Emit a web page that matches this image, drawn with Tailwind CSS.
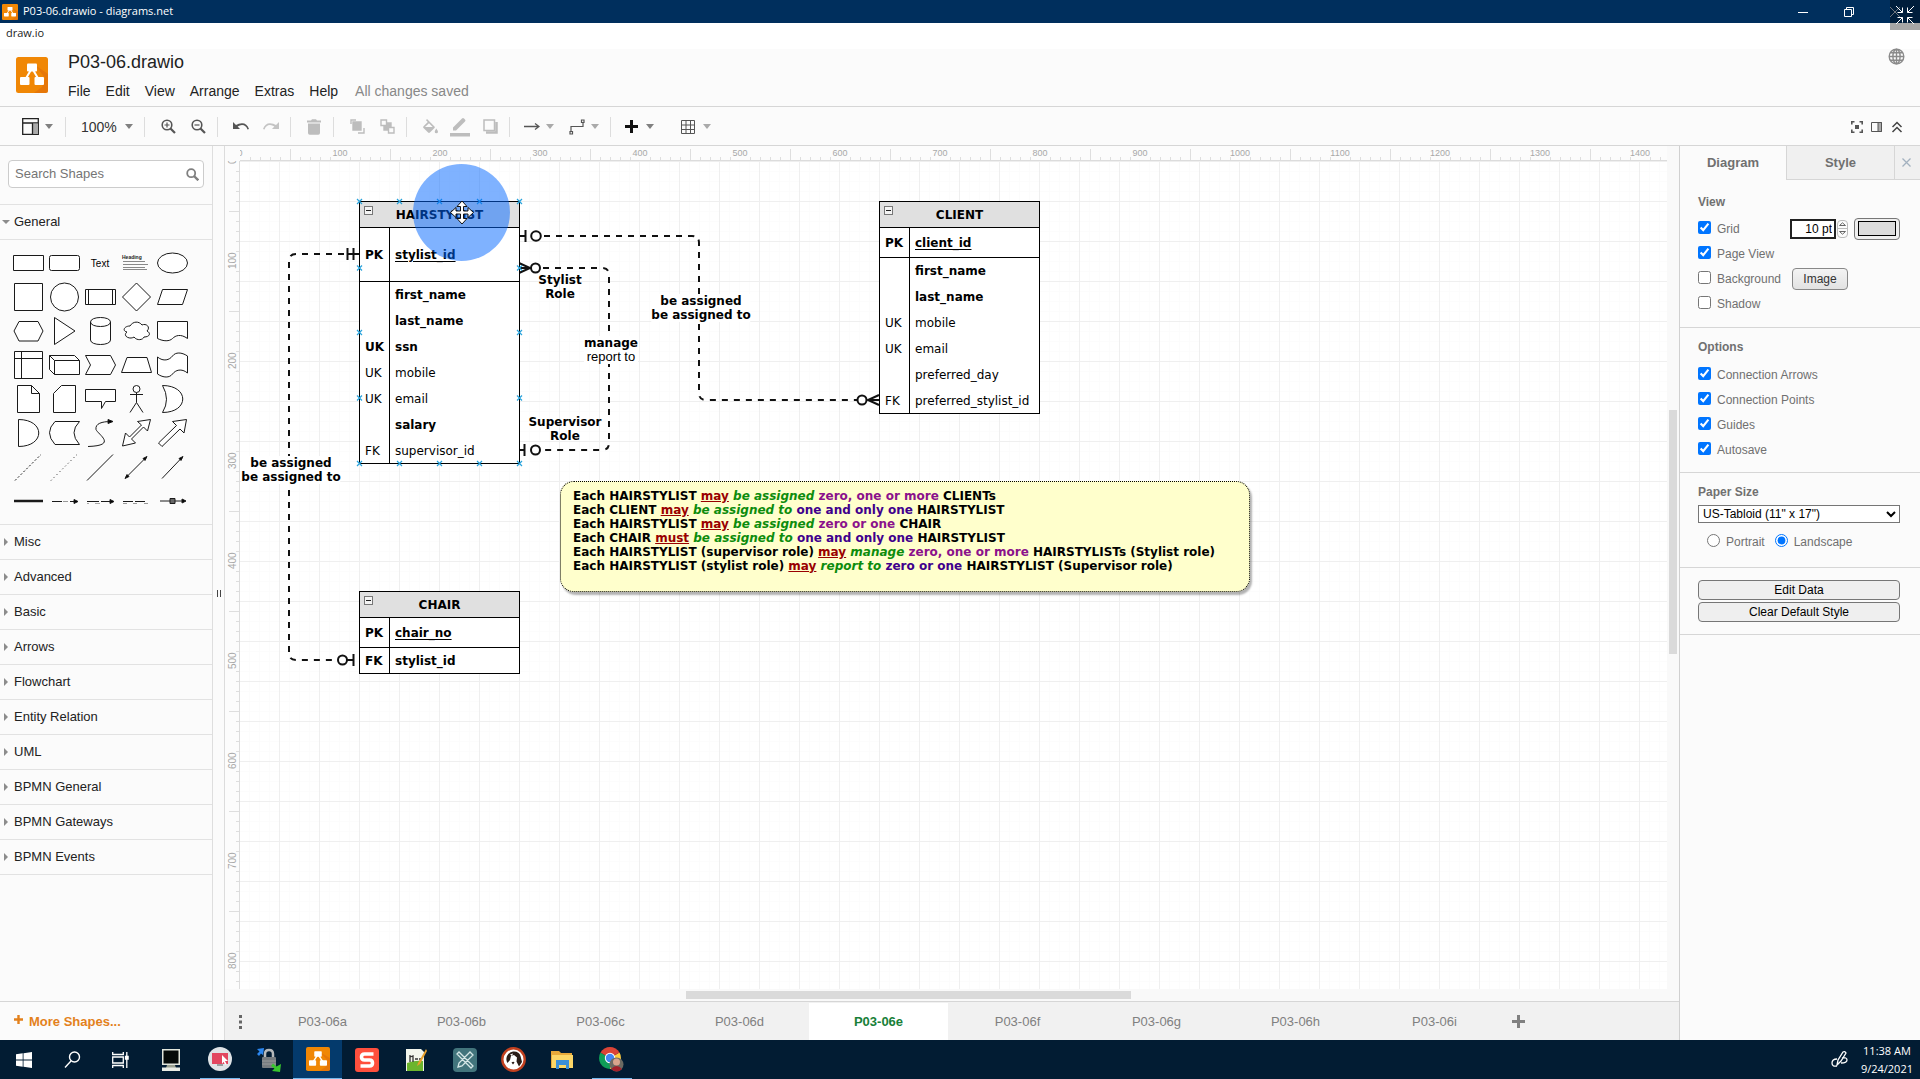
<!DOCTYPE html>
<html lang="en">
<head>
<meta charset="utf-8">
<title>P03-06.drawio - diagrams.net</title>
<script src="https://cdn.jsdelivr.net/npm/@tailwindcss/browser@4"></script>
</head>
<body class="flex min-h-screen flex-col overflow-x-hidden bg-[#fbfbfb] font-['Liberation_Sans',Arial,sans-serif] text-black">

<svg class="hidden">
  <symbol id="caret" viewBox="0 0 8 5"><path d="M0 0h8L4 5z" fill="currentColor"/></symbol>
  <symbol id="fold" viewBox="0 0 4 8"><path d="M0 0l4 4-4 4z" fill="#8c8c8c"/></symbol>
  <symbol id="drawio" viewBox="0 0 32 36" preserveAspectRatio="none">
    <rect width="32" height="36" rx="2.5" fill="#f08705"/>
    <path d="M19 8l10 13-3 9-8 6h11.500a2.500 2.500 0 002.500-2.500V17z" fill="#df6c0c" opacity=".6"/>
    <path d="M15.500 12L9 23M16.500 12L23 23" stroke="#fff" stroke-width="2"/>
    <rect x="11" y="6.500" width="10" height="8" rx="1" fill="#fff"/>
    <rect x="4" y="20" width="9.500" height="8" rx="1" fill="#fff"/>
    <rect x="18.500" y="20" width="9.500" height="8" rx="1" fill="#fff"/>
  </symbol>
  <symbol id="collapse" viewBox="0 0 9 9"><rect x=".5" y=".5" width="8" height="8" fill="#f4f4f4" stroke="#777"/><path d="M2 4.500h5" stroke="#222"/></symbol>
</svg>

<!-- Window title bar -->
<div class="relative flex h-[23px] items-center bg-[#002f5d] pl-[2px] font-['Open_Sans','Noto_Sans',sans-serif] text-[11px] text-white">
  <svg class="mr-[5px] h-4 w-4"><use href="#drawio"/></svg>
  <span>P03-06.drawio - diagrams.net</span>
  <div class="ml-auto flex items-center pr-[2px]">
    <button class="flex h-5 w-[46px] items-center justify-center" aria-label="Minimize"><svg width="10" height="10"><path d="M0 5.500h10" stroke="#fff"/></svg></button>
    <button class="flex h-5 w-[46px] items-center justify-center" aria-label="Restore"><svg width="10" height="10" fill="none" stroke="#fff"><path d="M.5 2.500h7v7h-7zM2.500 2.500v-2h7v7h-2"/></svg></button>
    <button class="flex h-5 w-[46px] items-center justify-center" aria-label="Close"><svg width="10" height="10" stroke="#aab4c0"><path d="M0 0l10 10M10 0L0 10"/></svg></button>
  </div>
  <button class="absolute right-0 top-0 flex h-[30px] w-[30px] items-center justify-center bg-black/35" aria-label="Exit full screen">
    <svg width="18" height="18" fill="none" stroke="#fff"><path d="M0 0l6.500 6.500M1.500 6.500h5v-5M18 0l-6.500 6.500M16.500 6.500h-5v-5M0 18l6.500-6.500M1.500 11.500h5v5M18 18l-6.500-6.500M16.500 11.500h-5v5"/></svg>
  </button>
</div>
<div class="h-[26px] bg-white pl-[6px] pt-[2px] font-['Open_Sans','Noto_Sans',sans-serif] text-[11px] leading-[16px] text-[#222]">draw.io</div>

<!-- File name and menus -->
<header class="flex h-[58px] items-start border-b border-[#d6d6d6] pl-4">
  <svg class="mt-2 h-9 w-8 shrink-0"><use href="#drawio"/></svg>
  <div class="ml-5">
    <h1 class="mt-[2px] text-lg leading-[22px] text-[#222]">P03-06.drawio</h1>
    <nav class="mt-[9px] flex gap-[15px] text-sm leading-[18px] text-[#222]">
      <button>File</button><button>Edit</button><button>View</button><button>Arrange</button><button>Extras</button><button>Help</button>
      <span class="ml-[2px] text-[#888]">All changes saved</span>
    </nav>
  </div>
  <button class="ml-auto mr-[15px] -mt-[1px]" aria-label="Language">
    <svg width="17" height="17" viewBox="0 0 17 17" fill="none" stroke="#8a8a8a" stroke-width="1.400"><circle cx="8.500" cy="8.500" r="7.300"/><ellipse cx="8.500" cy="8.500" rx="3.600" ry="7.300"/><path d="M8.500 1v15M1 8.500h15M2.300 4.700h12.400M2.300 12.300h12.400"/></svg>
  </button>
</header>

<!-- Toolbar -->
<div class="flex h-[39px] items-center border-b border-[#d6d6d6] pt-[1px] text-[#808080]">
  <div class="flex h-5 w-[66px] items-center border-r border-[#ddd] pl-[22px]">
    <button class="flex items-center gap-[6px]" aria-label="View"><svg width="17" height="17" fill="none" stroke="#222" stroke-width="1.300"><path d="M.7.7h15.600v15.600H.7zM.7 5h15.600"/><path d="M11 5.500h5v10.500h-5z" fill="#aaa" stroke="none"/><path d="M10.500 5v11"/></svg><svg class="h-[5px] w-2"><use href="#caret"/></svg></button>
  </div>
  <div class="flex h-5 w-[79px] items-center border-r border-[#ddd] pl-[15px]">
    <button class="flex items-center gap-2 text-sm"><span class="text-[#333]">100%</span><svg class="h-[5px] w-2"><use href="#caret"/></svg></button>
  </div>
  <div class="flex h-5 w-[73px] items-center border-r border-[#ddd] pl-2">
    <button class="flex w-[30px] justify-center" aria-label="Zoom in"><svg width="15" height="15" fill="none" stroke="#555"><circle cx="6" cy="6" r="4.800" stroke-width="1.600"/><path d="M9.500 9.500l4.500 4.500" stroke-width="2.200"/><path d="M3.500 6h5M6 3.500v5" stroke-width="1.200"/></svg></button>
    <button class="flex w-[30px] justify-center" aria-label="Zoom out"><svg width="15" height="15" fill="none" stroke="#555"><circle cx="6" cy="6" r="4.800" stroke-width="1.600"/><path d="M9.500 9.500l4.500 4.500" stroke-width="2.200"/><path d="M3.500 6h5" stroke-width="1.200"/></svg></button>
  </div>
  <div class="flex h-5 w-[73px] items-center border-r border-[#ddd] pl-2">
    <button class="flex w-[30px] justify-center" aria-label="Undo"><svg width="16" height="9"><path d="M0 0v7h7L4.600 4.600Q7 3 9 3q4 0 5.500 4.500L16 7Q14 1.200 9 1.200 5.500 1.200 3 3z" fill="#555"/></svg></button>
    <button class="flex w-[30px] justify-center" aria-label="Redo"><svg width="16" height="9"><path d="M16 0v7H9l2.400-2.400Q9 3 7 3 3 3 1.500 7.500L0 7Q2 1.200 7 1.200q3.500 0 6 1.800z" fill="#c4c4c4"/></svg></button>
  </div>
  <div class="flex h-5 w-[43px] items-center justify-center border-r border-[#ddd] pl-1">
    <button aria-label="Delete"><svg width="14" height="16" fill="#bdbdbd"><path d="M0 1.500h4L5 .3h4l1 1.200h4v2H0zM1 4.500h12V14q0 1.700-1.700 1.700H2.700Q1 15.700 1 14z"/></svg></button>
  </div>
  <div class="flex h-5 w-[73px] items-center border-r border-[#ddd] pl-2">
    <button class="flex w-[30px] justify-center" aria-label="To front"><svg width="15" height="15" fill="none" stroke="#bdbdbd" stroke-width="1.400"><path d="M3 3h8v8H3z" fill="#bdbdbd"/><path d="M1 5V1h5M14 9v5H8"/></svg></button>
    <button class="flex w-[30px] justify-center" aria-label="To back"><svg width="15" height="15" fill="none" stroke="#bdbdbd" stroke-width="1.400"><path d="M1 1h5.500v5.500H1zM8.500 8.500H14V14H8.500z"/><path d="M7.500 4H11v3.500H7.500zM4 7.500h3.500V11H4z" fill="#bdbdbd"/></svg></button>
  </div>
  <div class="flex h-5 w-[103px] items-center border-r border-[#ddd] pl-2">
    <button class="flex w-[30px] justify-center" aria-label="Fill color"><svg width="16" height="15" fill="#bdbdbd"><path d="M5 0l7.500 7.500q.7.700 0 1.400l-4.600 4.600q-.9.900-1.800 0L1.500 9q-.9-.9 0-1.800L5.800 3 4 1.200zM7 4.300L3 8h7.700zM14.300 9.500q1.700 2.200 1.700 3.200a1.600 1.600 0 01-3.300 0q0-1 1.600-3.200z"/></svg></button>
    <button class="flex w-[30px] justify-center" aria-label="Line color"><svg width="20" height="20" fill="#bdbdbd"><path d="M3 13.500v-3L12 1.500q1-1 2 0l1 1q1 1 0 2L6 13.500zM0 16h20v3.500H0z"/></svg></button>
    <button class="flex w-[30px] justify-center" aria-label="Shadow"><svg width="15" height="15" fill="none" stroke="#bdbdbd"><path d="M1 1h10.500v10.500H1z" stroke-width="1.500"/><path d="M3 13.500h10.500V3" stroke-width="2.500"/></svg></button>
  </div>
  <div class="flex h-5 w-[101px] items-center border-r border-[#ddd] pl-2 text-[#aaa]">
    <button class="flex w-[45px] items-center gap-[6px] pl-[6px]" aria-label="Connection"><svg width="16" height="9" fill="none" stroke="#555" stroke-width="1.300"><path d="M0 4.500h15M11 1.500l4 3-4 3"/></svg><svg class="h-[5px] w-2"><use href="#caret"/></svg></button>
    <button class="flex w-[45px] items-center gap-[6px] pl-[6px]" aria-label="Waypoints"><svg width="16" height="16" fill="none" stroke="#555" stroke-width="1.200"><path d="M2 12.500V7.500h12V3.500"/><path d="M1 12.500h2.500V15H1zM12.500 1H15v2.500h-2.500z"/></svg><svg class="h-[5px] w-2"><use href="#caret"/></svg></button>
  </div>
  <div class="flex h-5 items-center pl-2">
    <button class="flex w-[57px] items-center gap-[8px] pl-[6px]" aria-label="Insert"><svg width="13" height="13"><path d="M6.500 0v13M0 6.500h13" stroke="#111" stroke-width="3"/></svg><svg class="h-[5px] w-2"><use href="#caret"/></svg></button>
    <button class="flex items-center gap-[8px] pl-[5px] text-[#aaa]" aria-label="Table"><svg width="14" height="14" fill="none" stroke="#555"><path d="M.5.5h13v13H.5zM5 .5v13M9.500.5v13M.5 5h13M.5 9.500h13"/></svg><svg class="h-[5px] w-2"><use href="#caret"/></svg></button>
  </div>
  <div class="ml-auto flex items-center gap-2 pr-[17px]">
    <button aria-label="Fullscreen"><svg width="12" height="12" fill="none" stroke="#555" stroke-width="1.600"><path d="M.8 3.500V.8h2.700M8.500.8h2.700v2.700M11.200 8.500v2.700H8.500M3.500 11.200H.8V8.500"/><path d="M4 4h4v4H4z" fill="#555" stroke="none"/></svg></button>
    <button aria-label="Format"><svg width="12" height="12" fill="none" stroke="#555"><path d="M.5 1.500h10v9h-10z"/><path d="M7 1.500h3.500v9H7z" fill="#aaa"/></svg></button>
    <button aria-label="Collapse"><svg width="12" height="12" fill="none" stroke="#444" stroke-width="1.500"><path d="M1.500 6L6 1.500 10.500 6M1.500 11L6 6.500l4.500 4.500"/></svg></button>
  </div>
</div>

<div class="flex flex-1">
  <!-- Shape library -->
  <aside class="flex w-[213px] shrink-0 flex-col border-r border-[#dedede] text-[13px] text-[#222]">
    <div class="border-b border-[#e2e2e2] px-2 pb-4 pt-[14px]">
      <label class="flex h-7 items-center rounded border border-[#ccc] bg-white pl-[6px] pr-1">
        <input type="text" placeholder="Search Shapes" aria-label="Search Shapes" class="w-full min-w-0 bg-transparent text-[13px] outline-none placeholder:text-[#757575]">
        <svg width="13" height="13" fill="none" stroke="#808080" class="shrink-0"><circle cx="5.200" cy="5.200" r="4" stroke-width="1.800"/><path d="M8 8l4.300 4.300" stroke-width="2.400"/></svg>
      </label>
    </div>
    <button class="flex h-[35px] items-center gap-1 border-b border-[#e2e2e2] pl-[2px]"><svg class="h-[4px] w-[8px] shrink-0 text-[#8c8c8c]" viewBox="0 0 8 4"><path d="M0 0h8L4 4z" fill="currentColor"/></svg>General</button>
    <div class="grid grid-cols-[repeat(5,36px)] border-b border-[#e2e2e2] pb-[6px] pl-[10px] pt-[6px] [&_svg]:h-[34px] [&_svg]:w-9 [&_svg]:fill-white [&_svg]:stroke-[#1a1a1a]">
      <svg><path d="M3.500 9.500h30v15h-30z"/></svg>
      <svg><rect x="3.500" y="9.500" width="30" height="15" rx="2"/></svg>
      <span class="flex items-center justify-center text-[10px] text-black">Text</span>
      <svg><path d="M5 15.500h22M5 18.500h25M5 21.500h22M5 23.500h24" style="stroke:#888"/><text x="4" y="13" font-size="5" font-weight="700" style="fill:#222;stroke:none">Heading</text></svg>
      <svg><ellipse cx="18.500" cy="17" rx="15" ry="10"/></svg>

      <svg><path d="M4.500 3.500h28v27h-28z"/></svg>
      <svg><circle cx="18.500" cy="17" r="14"/></svg>
      <svg><path d="M3.500 9.500h30v15h-30zM6.500 9.500v15M30.500 9.500v15"/></svg>
      <svg><path d="M18.500 3l14 14-14 14-14-14z"/></svg>
      <svg><path d="M8.500 9.500h25l-5 15h-25z"/></svg>

      <svg><path d="M9 7.500h19l5 9.500-5 10H9l-5-10z"/></svg>
      <svg><path d="M8.500 3.500v27L29 17z"/></svg>
      <svg><path d="M8.500 8v18c0 6 20 6 20 0V8c0-6-20-6-20 0c0 6 20 6 20 0"/></svg>
      <svg><path d="M12 12c-6 0-8 5-3 6-5 4 3 8 7 5 3 4 9 3 10 0 6 0 7-4 3-6 4-4-1-8-5-6-3-4-9-4-12 1z"/></svg>
      <svg><path d="M3.500 7.500h30v17c-7-5-12-3-15 0s-9 3-15 0z"/></svg>

      <svg><path d="M4.500 3.500h28v27h-28zM11.500 3.500v27M4.500 10.500h28"/></svg>
      <svg><path d="M3.500 7.500h25l5 5v14h-25l-5-5zM3.500 7.500l5 5h25M8.500 12.500v14"/></svg>
      <svg><path d="M3.500 7.500h25l5 9.500-5 9.500h-25l5-9.500z"/></svg>
      <svg><path d="M9 9.500h20l4.500 15h-30z"/></svg>
      <svg><path d="M3.500 9c6 5 12 3 15-1s9-4 15 0v17c-6-5-12-3-15 1s-9 4-15 0z"/></svg>

      <svg><path d="M7.500 3.500h14l8 8v19h-22zM21.500 3.500v8h8"/></svg>
      <svg><path d="M15.500 3.500h14v27h-22v-19z"/></svg>
      <svg><path d="M3.500 7.500h30v12h-10l-4 7v-7h-16z"/></svg>
      <svg><circle cx="18.500" cy="7" r="3.500"/><path d="M18.500 10.500v10M12 12.500h13M18.500 20.500l-6.500 10M18.500 20.500l6.500 10" fill="none"/></svg>
      <svg><path d="M8.500 3.500c27 0 27 27 0 27q8-13 0-27z"/></svg>

      <svg><path d="M8.500 3.500c27 0 27 27 0 27z"/></svg>
      <svg><path d="M9 5.500h24.500q-11 11 0 23H9q-11-12 0-23z"/></svg>
      <svg><path d="M6 30.500c30-1 10-12 8-17-1-6 6-8 15-8" style="fill:none"/><path d="M26 3.500l5 2-5 2z" style="fill:#000"/></svg>
      <svg><path d="M32.500 3.500l-13 2 4 3.500-12 12-4-4-3 13 13-3-4-4 12-12 4 4z"/></svg>
      <svg><path d="M32.500 3.500l-14 2 4 4L4.500 27l3.500 3.500L26 13l4 4z"/></svg>

      <svg><path d="M5 30.500l26-26" stroke-dasharray="2 2"/></svg>
      <svg><path d="M5 30.500l26-26" stroke-dasharray="1 3"/></svg>
      <svg><path d="M5 30.500l26-26"/></svg>
      <svg><path d="M8 27.500l20-20"/><path d="M29 6.500l-2 4-2-2zM7 28.500l2-4 2 2z" style="fill:#000"/></svg>
      <svg><path d="M8 28.500l20-21"/><path d="M29 6.500l-2 4-2-2z" style="fill:#000"/></svg>

      <svg><path d="M4 17h29" stroke-width="2.500"/></svg>
      <svg><path d="M6 17.500h10M24 17.500h7"/><path d="M17 17.500h5" style="stroke:#999"/><path d="M28 15.500l4 2-4 2z" style="fill:#000"/></svg>
      <svg><path d="M5 17.500h25" stroke-dasharray="12 2"/><path d="M5 19.500h2M13 19.500h5" style="stroke:#aaa"/><path d="M28 15.500l4 2-4 2z" style="fill:#000"/></svg>
      <svg><path d="M5 17.500h23" stroke-dasharray="10 2"/><path d="M5 19.500h4M15 19.500h4M26 19.500h4" style="stroke:#999"/></svg>
      <svg><path d="M6 17h25"/><path d="M16 14.500h5v5h-5z" style="fill:#666"/><path d="M28 15l4 2-4 2z" style="fill:#000"/></svg>
    </div>
    <button class="flex h-[35px] items-center gap-[6px] border-b border-[#e2e2e2] pl-1"><svg class="h-2 w-1"><use href="#fold"/></svg>Misc</button>
    <button class="flex h-[35px] items-center gap-[6px] border-b border-[#e2e2e2] pl-1"><svg class="h-2 w-1"><use href="#fold"/></svg>Advanced</button>
    <button class="flex h-[35px] items-center gap-[6px] border-b border-[#e2e2e2] pl-1"><svg class="h-2 w-1"><use href="#fold"/></svg>Basic</button>
    <button class="flex h-[35px] items-center gap-[6px] border-b border-[#e2e2e2] pl-1"><svg class="h-2 w-1"><use href="#fold"/></svg>Arrows</button>
    <button class="flex h-[35px] items-center gap-[6px] border-b border-[#e2e2e2] pl-1"><svg class="h-2 w-1"><use href="#fold"/></svg>Flowchart</button>
    <button class="flex h-[35px] items-center gap-[6px] border-b border-[#e2e2e2] pl-1"><svg class="h-2 w-1"><use href="#fold"/></svg>Entity Relation</button>
    <button class="flex h-[35px] items-center gap-[6px] border-b border-[#e2e2e2] pl-1"><svg class="h-2 w-1"><use href="#fold"/></svg>UML</button>
    <button class="flex h-[35px] items-center gap-[6px] border-b border-[#e2e2e2] pl-1"><svg class="h-2 w-1"><use href="#fold"/></svg>BPMN General</button>
    <button class="flex h-[35px] items-center gap-[6px] border-b border-[#e2e2e2] pl-1"><svg class="h-2 w-1"><use href="#fold"/></svg>BPMN Gateways</button>
    <button class="flex h-[35px] items-center gap-[6px] border-b border-[#e2e2e2] pl-1"><svg class="h-2 w-1"><use href="#fold"/></svg>BPMN Events</button>
    <button class="mt-auto flex h-[39px] items-center gap-[6px] border-t border-[#d6d6d6] pl-[14px] pt-[1px] font-bold text-[#e3811c]"><svg width="9" height="9" class="-mt-1"><path d="M4.500 0v9M0 4.500h9" stroke="#e3811c" stroke-width="2.400"/></svg>More Shapes...</button>
  </aside>
  <div class="flex w-[11px] shrink-0 items-center justify-center"><svg width="4" height="7"><path d="M.5 0v7M3.500 0v7" stroke="#444"/></svg></div>

  <!-- Canvas -->
  <main class="flex min-w-0 flex-1 flex-col border-l border-[#dcdcdc]">
    <div class="flex flex-1">
      <div class="flex min-w-0 flex-1 flex-col">
        <div class="flex h-[15px]">
          <div class="w-[15px] shrink-0"></div>
          <div class="relative min-w-0 flex-1 overflow-hidden border-b border-[#dcdcdc] bg-[#fcfcfc]">
            <svg class="absolute inset-0 h-full w-full"><defs><pattern id="hticks" width="100" height="15" patternUnits="userSpaceOnUse"><path d="M10.500 11v4M20.500 11v4M30.500 11v4M40.500 11v4M50.500 3v12M60.500 11v4M70.500 11v4M80.500 11v4M90.500 11v4" stroke="#dedede"/></pattern></defs><rect width="100%" height="100%" fill="url(#hticks)"/></svg>
            <div class="relative -ml-[50px] flex text-[9px] leading-[15px] text-[#a8a8a8] [&>span]:w-[100px] [&>span]:shrink-0 [&>span]:text-center"><span>0</span><span>100</span><span>200</span><span>300</span><span>400</span><span>500</span><span>600</span><span>700</span><span>800</span><span>900</span><span>1000</span><span>1100</span><span>1200</span><span>1300</span><span>1400</span></div>
          </div>
        </div>
        <div class="flex flex-1">
          <div class="relative w-[15px] shrink-0 overflow-hidden border-r border-[#dcdcdc] bg-[#fcfcfc]">
            <svg class="absolute inset-0 h-full w-full"><defs><pattern id="vticks" width="15" height="100" patternUnits="userSpaceOnUse"><path d="M11 10.500h4M11 20.500h4M11 30.500h4M11 40.500h4M4 50.500h12M11 60.500h4M11 70.500h4M11 80.500h4M11 90.500h4" stroke="#dedede"/></pattern></defs><rect width="100%" height="100%" fill="url(#vticks)"/></svg>
            <div class="absolute -top-[50px] left-0 flex w-[15px] flex-col items-center text-[10px] leading-[15px] text-[#a8a8a8] [&>span]:h-[100px] [&>span]:rotate-180 [&>span]:text-center [&>span]:[writing-mode:vertical-rl]"><span>0</span><span>100</span><span>200</span><span>300</span><span>400</span><span>500</span><span>600</span><span>700</span><span>800</span></div>
          </div>
          <div class="relative min-w-0 flex-1 overflow-hidden bg-white font-['DejaVu_Sans',Verdana,sans-serif] text-xs leading-[14px]">
            <svg class="absolute inset-0 h-full w-full" fill="none" stroke="#111" stroke-width="2">
              <defs><pattern id="grid" x="-1" y="0" width="40" height="40" patternUnits="userSpaceOnUse">
                <path d="M10.500 0v40M20.500 0v40M30.500 0v40M0 10.500h40M0 20.500h40M0 30.500h40" stroke="#fcfcfc" stroke-width="1"/><path d="M.5 0v40M0 .5h40" stroke="#efefef" stroke-width="1"/></pattern></defs>
              <rect width="100%" height="100%" fill="url(#grid)" stroke="none"/>
              <!-- hairstylist to chair -->
              <path d="M104 93H56Q49 93 49 100V492Q49 499 56 499H98" stroke-dasharray="6 6"/>
              <path d="M107.500 87v12M113.500 87v12M107 93h12M107 499h7M113.500 493v12"/><circle cx="102.500" cy="499" r="4.500" fill="#fff"/>
              <!-- hairstylist to client -->
              <path d="M304 75H452Q459 75 459 82V232Q459 239 466 239H617" stroke-dasharray="6 6"/>
              <path d="M279 75h7M285.500 69v12M639 234l-11 5 11 5M628 239h11"/><circle cx="296" cy="75" r="4.800" fill="#fff"/><circle cx="622" cy="239" r="4.500" fill="#fff"/>
              <!-- hairstylist to itself -->
              <path d="M303 107H362Q369 107 369 114V282Q369 289 362 289H303" stroke-dasharray="6 6"/>
              <path d="M279 102l11 5-11 5M279 107h12M279 289h5M284.500 283v12"/><circle cx="295.500" cy="107" r="4.500" fill="#fff"/><circle cx="295.500" cy="289" r="4.500" fill="#fff"/>
            </svg>

            <div class="absolute left-[51px] top-[295px] -translate-x-1/2 whitespace-nowrap bg-white text-center font-bold">be assigned<br>be assigned to</div>
            <div class="absolute left-[461px] top-[133px] -translate-x-1/2 whitespace-nowrap bg-white text-center font-bold">be assigned<br>be assigned to</div>
            <div class="absolute left-[320px] top-[112px] -translate-x-1/2 text-center font-bold">Stylist<br>Role</div>
            <div class="absolute left-[325px] top-[254px] -translate-x-1/2 text-center font-bold">Supervisor<br>Role</div>
            <div class="absolute left-[371px] top-[175px] -translate-x-1/2 whitespace-nowrap bg-white text-center"><b>manage</b><br><span class="font-['Liberation_Sans',Arial,sans-serif] text-[13px]">report to</span></div>

            <table class="absolute left-[119px] top-[40px] w-[161px] table-fixed border-separate border-spacing-0 border-x border-t border-black bg-white text-left [&_td]:border-black [&_td]:p-0 [&_td]:pl-[5px] [&_tr>td:first-child]:border-r">
              <colgroup><col class="w-[30px]"><col></colgroup>
              <tr class="h-[26px]"><th colspan="2" class="border-b border-black bg-[#e0e0e0] p-0 text-center">HAIRSTYLIST</th></tr>
              <tr class="h-[54px] font-bold"><td class="border-b">PK</td><td class="border-b underline underline-offset-2">stylist_id</td></tr>
              <tr class="h-[26px] font-bold"><td></td><td>first_name</td></tr>
              <tr class="h-[26px] font-bold"><td></td><td>last_name</td></tr>
              <tr class="h-[26px] font-bold"><td>UK</td><td>ssn</td></tr>
              <tr class="h-[26px]"><td>UK</td><td>mobile</td></tr>
              <tr class="h-[26px]"><td>UK</td><td>email</td></tr>
              <tr class="h-[26px] font-bold"><td></td><td>salary</td></tr>
              <tr class="h-[26px]"><td class="border-b">FK</td><td class="border-b">supervisor_id</td></tr>
            </table>
            <table class="absolute left-[639px] top-[40px] w-[161px] table-fixed border-separate border-spacing-0 border-x border-t border-black bg-white text-left [&_td]:whitespace-nowrap [&_td]:border-black [&_td]:p-0 [&_td]:pl-[5px] [&_tr>td:first-child]:border-r">
              <colgroup><col class="w-[30px]"><col></colgroup>
              <tr class="h-[26px]"><th colspan="2" class="border-b border-black bg-[#e0e0e0] p-0 text-center">CLIENT</th></tr>
              <tr class="h-[30px] font-bold"><td class="border-b">PK</td><td class="border-b underline underline-offset-2">client_id</td></tr>
              <tr class="h-[26px] font-bold"><td></td><td>first_name</td></tr>
              <tr class="h-[26px] font-bold"><td></td><td>last_name</td></tr>
              <tr class="h-[26px]"><td>UK</td><td>mobile</td></tr>
              <tr class="h-[26px]"><td>UK</td><td>email</td></tr>
              <tr class="h-[26px]"><td></td><td>preferred_day</td></tr>
              <tr class="h-[26px]"><td class="border-b">FK</td><td class="border-b">preferred_stylist_id</td></tr>
            </table>
            <table class="absolute left-[119px] top-[430px] w-[161px] table-fixed border-separate border-spacing-0 border-x border-t border-black bg-white text-left font-bold [&_td]:border-black [&_td]:p-0 [&_td]:pl-[5px] [&_tr>td:first-child]:border-r">
              <colgroup><col class="w-[30px]"><col></colgroup>
              <tr class="h-[26px]"><th colspan="2" class="border-b border-black bg-[#e0e0e0] p-0 text-center">CHAIR</th></tr>
              <tr class="h-[30px]"><td class="border-b">PK</td><td class="border-b underline underline-offset-2">chair_no</td></tr>
              <tr class="h-[26px]"><td class="border-b">FK</td><td class="border-b">stylist_id</td></tr>
            </table>

            <div class="absolute left-[320px] top-[320px] h-[111px] w-[690px] whitespace-nowrap rounded-[14px] border border-dotted border-black bg-[#ffffcc] pl-3 pt-[7px] font-bold shadow-[2px_3px_2px_rgba(0,0,0,0.3)] [&_em]:text-[#0c8c0c] [&_i]:not-italic [&_i]:text-[#8b128b] [&_u]:text-[#990000] [&_s]:text-[#40008c] [&_s]:no-underline">
              <p>Each HAIRSTYLIST <u>may</u> <em>be assigned</em> <i>zero, one or more</i> CLIENTs</p>
              <p>Each CLIENT <u>may</u> <em>be assigned to</em> <s>one and only one</s> HAIRSTYLIST</p>
              <p>Each HAIRSTYLIST <u>may</u> <em>be assigned</em> <i>zero or one</i> CHAIR</p>
              <p>Each CHAIR <u>must</u> <em>be assigned to</em> <s>one and only one</s> HAIRSTYLIST</p>
              <p>Each HAIRSTYLIST (supervisor role) <u>may</u> <em>manage</em> <i>zero, one or more</i> HAIRSTYLISTs (Stylist role)</p>
              <p>Each HAIRSTYLIST (stylist role) <u>may</u> <em>report to</em> <s>zero or one</s> HAIRSTYLIST (Supervisor role)</p>
            </div>

            <!-- fold handles, connection points and pointer highlight -->
            <svg class="pointer-events-none absolute inset-0 h-full w-full">
              <defs><path id="x" d="M-2.500-2.500l5 5M2.500-2.500l-5 5" stroke="#29a3dc" stroke-width="1.200"/></defs>
              <use href="#collapse" x="124" y="45" width="9" height="9"/><use href="#collapse" x="644" y="45" width="9" height="9"/><use href="#collapse" x="124" y="435" width="9" height="9"/>
              <use href="#x" x="119.500" y="40.500"/><use href="#x" x="159.500" y="40.500"/><use href="#x" x="199.500" y="40.500"/><use href="#x" x="239.500" y="40.500"/><use href="#x" x="279.500" y="40.500"/>
              <use href="#x" x="119.500" y="302.500"/><use href="#x" x="159.500" y="302.500"/><use href="#x" x="199.500" y="302.500"/><use href="#x" x="239.500" y="302.500"/><use href="#x" x="279.500" y="302.500"/>
              <use href="#x" x="119.500" y="107"/><use href="#x" x="119.500" y="171.500"/><use href="#x" x="119.500" y="237"/><use href="#x" x="279.500" y="107"/><use href="#x" x="279.500" y="171.500"/><use href="#x" x="279.500" y="237"/>
              <circle cx="221.500" cy="51.500" r="48.500" fill="#0066ff" fill-opacity=".5"/>
              <path d="M222 40l5 5.500h-3.500v4.500h4.500v-3.500l5.500 5-5.500 5v-3.500h-4.500v4.500h3.500l-5 5.500-5-5.500h3.500v-4.500h-4.500v3.500l-5.500-5 5.500-5v3.500h4.500v-4.500H217z" fill="#fff" stroke="#111"/>
            </svg>
          </div>
        </div>
      </div>
      <div class="w-3 shrink-0 bg-[#f9f9f9] pl-[2px] pt-[264px]"><div class="h-[244px] w-2 bg-[#dadada]"></div></div>
    </div>
    <div class="h-3 bg-[#f9f9f9] pl-[461px] pt-[2px]"><div class="h-2 w-[445px] bg-[#dadada]"></div></div>
    <!-- Page tabs -->
    <div class="flex h-[39px] border-t border-[#d6d6d6] bg-[#f1f1f1] pt-[1px] text-[13px] text-[#808080] [&>button]:flex [&>button]:items-center [&>button]:justify-center">
      <button class="w-7 pl-[2px]" aria-label="Pages"><svg width="3" height="14" fill="#666"><path d="M0 0h3v3H0zM0 5.500h3v3H0zM0 11h3v3H0z"/></svg></button>
      <button class="w-[139px]">P03-06a</button><button class="w-[139px]">P03-06b</button><button class="w-[139px]">P03-06c</button><button class="w-[139px]">P03-06d</button><button class="w-[139px] bg-white font-bold text-[#188038]">P03-06e</button><button class="w-[139px]">P03-06f</button><button class="w-[139px]">P03-06g</button><button class="w-[139px]">P03-06h</button><button class="w-[139px]">P03-06i</button>
      <button class="w-7" aria-label="Insert page"><svg width="13" height="13"><path d="M6.500 0v13M0 6.500h13" stroke="#808080" stroke-width="3"/></svg></button>
    </div>
  </main>

  <!-- Format panel -->
  <aside class="w-[241px] shrink-0 border-l border-[#d0d0d0] text-xs text-[#707070]">
    <div class="flex h-[34px] text-[13px] font-bold">
      <button class="w-[106px]">Diagram</button>
      <button class="w-[108px] border-b border-l border-[#d6d6d6] bg-[#f0f0f0]">Style</button>
      <button class="flex flex-1 items-center justify-center border-b border-l border-[#d6d6d6] bg-[#f0f0f0] pr-[2px]" aria-label="Close panel"><svg width="9" height="9" stroke="#a3b1bf" stroke-width="1.300"><path d="M.5.5l8 8M8.500.5l-8 8"/></svg></button>
    </div>
    <section class="h-[148px] border-b border-[#d6d6d6] pl-[18px] pt-[14px] [&_input[type=checkbox]]:mb-[3px] [&_input[type=checkbox]]:mr-[6px] [&_input[type=checkbox]]:h-[13px] [&_input[type=checkbox]]:w-[13px]">
      <h2 class="mb-[6px] font-bold leading-4">View</h2>
      <div class="flex h-[25px] items-center">
        <label class="flex w-[92px] items-center"><input type="checkbox" checked>Grid</label>
        <input type="text" value="10 pt" aria-label="Grid size" class="h-5 w-[46px] border-2 border-[#222] bg-white pr-[2px] text-right text-xs text-black outline-none">
        <span class="ml-[1px] flex h-[18px] w-[11px] flex-col justify-around rounded-sm border border-[#bbb]">
          <button aria-label="Increase" class="flex flex-1 items-center justify-center border-b border-[#bbb]"><svg width="7" height="4" fill="none" stroke="#666"><path d="M.5 3.500L3.500.8l3 2.700z"/></svg></button>
          <button aria-label="Decrease" class="flex flex-1 items-center justify-center"><svg width="7" height="4" fill="none" stroke="#666"><path d="M.5.5l3 2.700 3-2.700z"/></svg></button>
        </span>
        <button aria-label="Grid color" class="ml-[6px] flex h-[22px] w-[46px] items-center justify-center rounded border border-[#777] bg-[#efefef]"><span class="h-[15px] w-[38px] border border-black bg-[#dcdcdc]"></span></button>
      </div>
      <label class="flex h-[25px] items-center"><input type="checkbox" checked>Page View</label>
      <div class="flex h-[25px] items-center"><label class="flex w-[94px] items-center"><input type="checkbox">Background</label><button class="h-[22px] w-14 rounded border border-[#888] bg-linear-to-b from-[#f4f4f4] to-[#e2e2e2] text-[#333]">Image</button></div>
      <label class="flex h-[25px] items-center"><input type="checkbox">Shadow</label>
    </section>
    <section class="h-[145px] border-b border-[#d6d6d6] pl-[18px] pt-[11px] [&_input]:mb-[2px] [&_input]:mr-[6px] [&_input]:h-[13px] [&_input]:w-[13px]">
      <h2 class="mb-[7px] font-bold leading-4">Options</h2>
      <label class="flex h-[25px] items-center"><input type="checkbox" checked>Connection Arrows</label>
      <label class="flex h-[25px] items-center"><input type="checkbox" checked>Connection Points</label>
      <label class="flex h-[25px] items-center"><input type="checkbox" checked>Guides</label>
      <label class="flex h-[25px] items-center"><input type="checkbox" checked>Autosave</label>
    </section>
    <section class="h-[95px] border-b border-[#d6d6d6] pl-[18px] pr-[20px] pt-[11px]">
      <h2 class="mb-[5px] font-bold leading-4">Paper Size</h2>
      <select aria-label="Paper Size" class="block h-[18px] w-full border border-[#767676] bg-white text-xs text-black"><option>US-Tabloid (11" x 17")</option></select>
      <div class="mt-[11px] flex items-center pl-[9px] [&_input]:mb-[3px] [&_input]:mr-[6px] [&_input]:h-[13px] [&_input]:w-[13px]">
        <label class="mr-[10px] flex items-center"><input type="radio" name="orientation">Portrait</label>
        <label class="flex items-center"><input type="radio" name="orientation" checked>Landscape</label>
      </div>
    </section>
    <section class="flex flex-col gap-[2px] border-b border-[#d6d6d6] pb-3 pl-[18px] pr-[20px] pt-3 text-black">
      <button class="h-5 rounded-sm border border-[#767676] bg-[#efefef]">Edit Data</button>
      <button class="h-5 rounded-sm border border-[#767676] bg-[#efefef]">Clear Default Style</button>
    </section>
  </aside>
</div>

<!-- Taskbar -->
<footer class="flex h-[39px] items-stretch bg-[#021c33] font-['Open_Sans','Noto_Sans',sans-serif] text-[11px] text-white [&>button]:flex [&>button]:items-center [&>button]:justify-center">
  <button class="w-12" aria-label="Start"><svg width="16" height="16" fill="#fff"><path d="M0 2.300l6.700-1v6.200H0zM7.500 1.200L16 0v7.500H7.500zM0 8.500h6.700v6.200L0 13.700zM7.500 8.500H16V16l-8.500-1.200z"/></svg></button>
  <button class="w-12" aria-label="Search"><svg width="17" height="17" fill="none" stroke="#fff" stroke-width="1.400"><circle cx="10.500" cy="6" r="5"/><path d="M7 10l-6 6.500"/></svg></button>
  <button class="w-12" aria-label="Task view"><svg width="17" height="16" fill="none" stroke="#fff" stroke-width="1.300"><path d="M.7 0v2.500h10.600V0M.7 16v-2.500h10.600V16M.7 5h10.600v6H.7zM14.800 0v16M13.500 4.500h2.600v2.600h-2.600z"/></svg></button>
  <button class="ml-[2px] w-[49px]" aria-label="Terminal"><svg width="20" height="22"><path d="M1 0h18v16H1z" fill="#e2e6dc"/><path d="M2.500 1.500h15v13h-15z" fill="#050a08"/><path d="M6 16h8l1 3H5z" fill="#9aa08f"/><path d="M1 18.500h18V22H1z" fill="#e9ece4"/></svg></button>
  <button class="w-[49px]" aria-label="Recorder"><span class="flex h-full w-10 items-center justify-center border-b border-[#76b9ed]"><svg width="24" height="24"><circle cx="12" cy="12" r="12" fill="#dfe3e6"/><path d="M4 6h16v11H4z" fill="#e2465f"/><path d="M9 18h6" stroke="#555"/><path d="M14 8l6 6h-3l1.500 3-1.500.8-1.500-3L14 17z" fill="#fff"/></svg></span></button>
  <button class="w-[49px]" aria-label="File transfer"><svg width="24" height="24"><path d="M8 11V6q0-4 4-4t4 4v5" fill="none" stroke="#b6b9bb" stroke-width="2.500"/><rect x="5" y="9" width="14" height="11" rx="1" fill="#777c80"/><path d="M5 13h14M5 16h14" stroke="#999"/><path d="M0 1l7-1-1 7-2-1.500L2 8 0 6l2.500-2.500z" fill="#2b86ef"/><path d="M24 16l-1 8-8-1 2.500-2.500L14 18l2-2.500 3.500 3z" fill="#38c52e"/></svg></button>
  <button class="w-[49px] border-b border-[#76b9ed] bg-[#043a6c]" aria-label="draw.io"><svg width="24" height="24"><use href="#drawio"/></svg></button>
  <button class="w-[49px]" aria-label="Snagit"><svg width="24" height="24"><rect width="24" height="24" rx="3" fill="#ff4f3d"/><path d="M18.500 6H9.500Q6.500 6 6.500 9t3 3h5q3 0 3 3t-3 3h-9" fill="none" stroke="#fff" stroke-width="3.600"/></svg></button>
  <button class="w-[49px]" aria-label="Notepad++"><svg width="22" height="24"><path d="M1 1h15l3 3v19H1z" fill="#f2f5ec"/><path d="M2 15q8-3 16-2v10H2z" fill="#6cb52d"/><path d="M5 7v7M5 9l3-1v6M10 11h3M14 11h3" stroke="#333" stroke-width="1.300" fill="none"/><path d="M21 1l-8 14-1 3 3-2 7-13z" fill="#e8a02c"/></svg></button>
  <button class="w-[49px]" aria-label="Design tools"><svg width="24" height="24" fill="none" stroke="#d5e6e6" stroke-width="1.300"><rect width="24" height="24" rx="4" fill="#42747c" stroke="none"/><path d="M4 6l2-2 14 14-2 2zM5 19l1-4L17 4l3 3L9 18z"/></svg></button>
  <button class="w-[49px]" aria-label="DBeaver"><svg width="25" height="25"><circle cx="12.500" cy="12.500" r="11.200" fill="#fff" stroke="#c1401f" stroke-width="2.400"/><path d="M6 9q2-4 6-4.500 6-.5 7.500 4.500l1.500 6-3 4.500-2.500-5 .5-4-3-2.500-3 1-1 4-2.500 3q-2-3-.5-7z" fill="#2a1d18"/><path d="M9 7.500l3-1-1 2.500z" fill="#fff"/><path d="M10.500 15.500q2-1.500 3 0l-1.500 2z" fill="#2a1d18"/></svg></button>
  <button class="w-[49px]" aria-label="File Explorer"><svg width="23" height="20"><path d="M0 1h8l2 2h11v15H0z" fill="#e8a93a"/><path d="M1 5h21v13H1z" fill="#fcd667"/><path d="M5 10h13v9h-3v-4H8v4H5z" fill="#3b8fd9"/></svg></button>
  <button class="w-[49px]" aria-label="Chrome"><span class="flex h-full w-10 items-center justify-center border-b border-[#76b9ed]"><svg width="25" height="25"><path d="M11 11L1.500 5.500A11 11 0 0011 22z" fill="#0f9d58"/><path d="M11 11l9.500-5.500A11 11 0 0111 22z" fill="#ffcd40"/><path d="M1.500 5.500A11 11 0 0120.500 5.500L11 11z" fill="#db4437"/><circle cx="11" cy="11" r="5.200" fill="#fff"/><circle cx="11" cy="11" r="4.200" fill="#4285f4"/><circle cx="17.500" cy="17.500" r="7" fill="#6c6a62"/><circle cx="17.500" cy="15" r="3.500" fill="#d9a48c"/><path d="M12 22q5.500-6 11 0-5 5-11 0z" fill="#a3202a"/></svg></span></button>
  <button class="ml-auto w-[29px]" aria-label="Windows Ink"><svg width="17" height="17" fill="none" stroke="#fff" stroke-width="1.300"><path d="M6 14l1-5 5-8q2-1 3 1l-5 8zM6 8q-5 0-5 4t5 3M11 7q5-1 5 2t-6 3"/></svg></button>
  <div class="flex flex-col justify-center gap-[2px] pl-[7px] pr-[7px] text-center leading-4"><span>11:38 AM</span><span>9/24/2021</span></div>
</footer>
</body>
</html>
